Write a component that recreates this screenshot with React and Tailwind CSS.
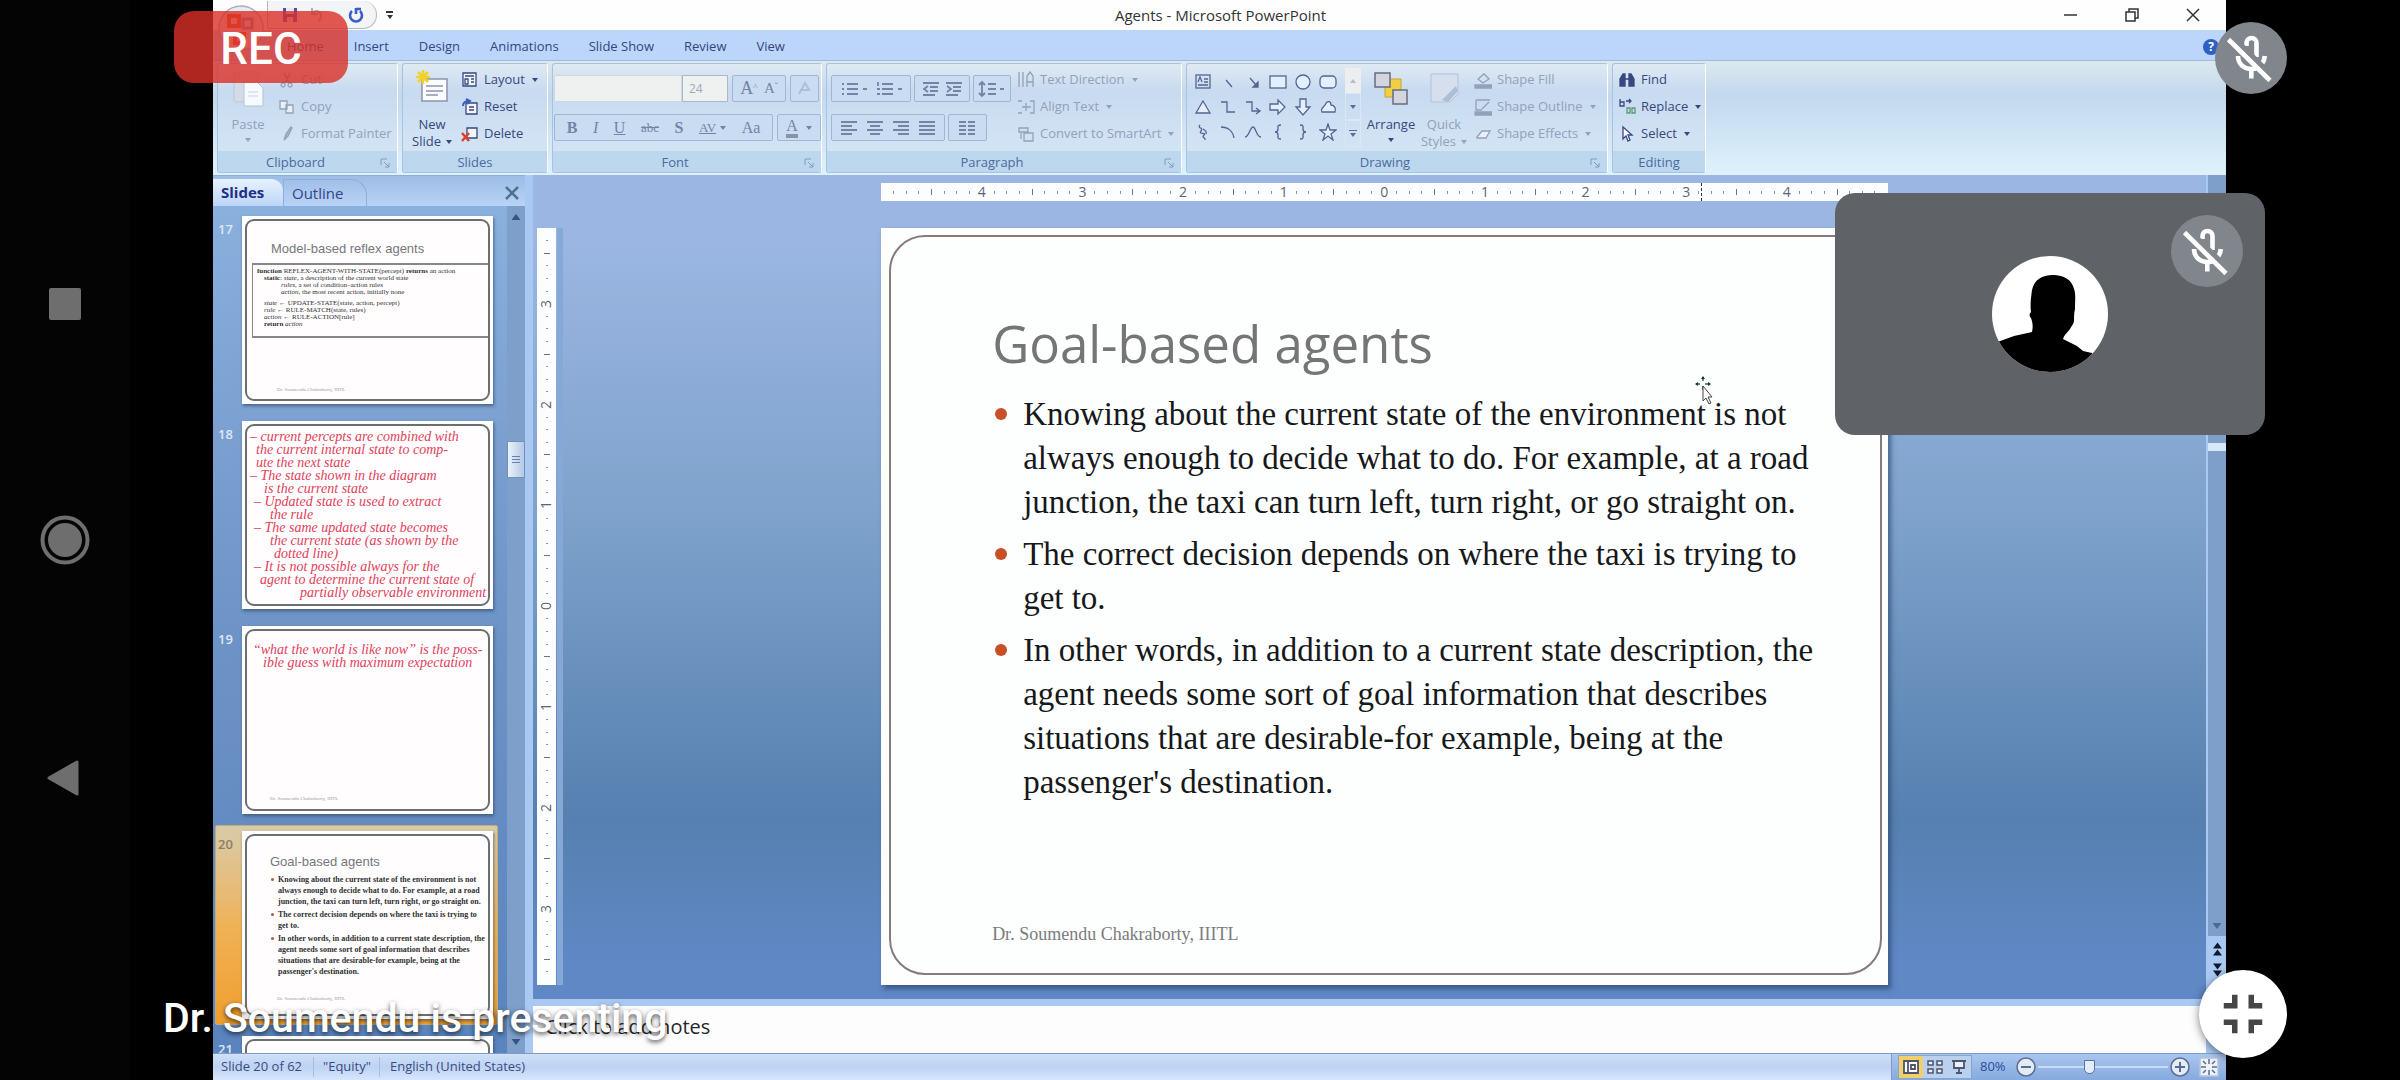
import React from "react";
import { MdFullscreenExit } from "react-icons/md";

const UI = "font-['Open_Sans',sans-serif]";
const SERIF = "font-['Liberation_Serif',serif]";

const bullets = [
  [
    "Knowing about the current state of the environment is not",
    "always enough to decide what to do. For example, at a road",
    "junction, the taxi can turn left, turn right, or go straight on.",
  ],
  ["The correct decision depends on where the taxi is trying to", "get to."],
  [
    "In other words, in addition to a current state description, the",
    "agent needs some sort of goal information that describes",
    "situations that are desirable-for example, being at the",
    "passenger's destination.",
  ],
];

function MicOff({ className }) {
  return (
    <button
      aria-label="Microphone off"
      className={"size-[72px] overflow-hidden rounded-full bg-[#80868b] " + className}
    >
      <svg viewBox="0 0 72 72" className="size-full" fill="none" stroke="#fff" strokeWidth="4.6">
        <path d="M31.500 24v-3a5 5 0 0 1 10 0v14" />
        <path d="M32 29v6a4.500 4.500 0 0 0 6 4z" fill="#fff" stroke="none" />
        <path d="M23 34c0 8 6 13 13.500 13 3 0 5.500-.8 8-2.500" />
        <path d="M36.300 46v10.500M49.800 34c-.2 2.800-1 5-2.500 7.200" />
        <path d="M13.500 17.500L55 58.500" stroke="#80868b" strokeWidth="9" transform="translate(2 -2)" />
        <path d="M13.500 17.500L55 58.500" />
      </svg>
    </button>
  );
}

function Arrow({ className = "" }) {
  return (
    <svg viewBox="0 0 6 4" className={"h-[4px] w-[6px] shrink-0 " + className} fill="currentColor">
      <path d="M0 0h6L3 4z" />
    </svg>
  );
}

function Small({ icon, label, arrow, off }) {
  return (
    <button
      className={
        "flex h-[27px] items-center gap-[5px] whitespace-nowrap text-[13px] " +
        (off ? "text-[#93a1b9]" : "text-[#37477f]")
      }
    >
      <svg viewBox="0 0 18 18" className="size-[18px] shrink-0" fill="none" stroke="currentColor" strokeWidth="1.300">
        {icon}
      </svg>
      {label}
      {arrow && <Arrow className="ml-[2px]" />}
    </button>
  );
}

function Group({ title, launcher, className, children }) {
  return (
    <section
      className={
        "flex shrink-0 flex-col overflow-hidden rounded-[3px] border border-[#a9c3de] border-r-white bg-linear-to-b from-[#dfeaf3] via-[#c8daf0] via-25% to-[#d6e8f5] " +
        className
      }
    >
      <div className="flex min-h-0 flex-1 items-start pt-[2px]">{children}</div>
      <div
        className={
          "relative flex h-[21px] items-center justify-center bg-[#bcd7ee] pt-[2px] text-[13px] text-[#4c6a9f] " +
          (launcher ? "pr-[24px]" : "")
        }
      >
        {title}
        {launcher && (
          <svg viewBox="0 0 10 10" className="absolute right-[7px] size-[10px]" fill="none" stroke="#7f9cc0">
            <path d="M1 7V1h6M4 4l5 5M9 5v4H5" />
          </svg>
        )}
      </div>
    </section>
  );
}

function Box({ className, children }) {
  return (
    <div
      className={
        "flex h-[27px] items-center justify-around rounded-[2px] border border-[#9fb6d5] bg-[#c9dcf2] px-[4px] text-[#7384a5] " +
        className
      }
    >
      {children}
    </div>
  );
}

function Glyph({ label, children, wide }) {
  return (
    <button aria-label={label} className={wide ? "h-[18px] w-[28px]" : "size-[18px]"}>
      <svg viewBox={wide ? "0 0 28 18" : "0 0 18 18"} className="size-full" fill="none" stroke="currentColor" strokeWidth="1.800">
        {children}
      </svg>
    </button>
  );
}

const shapes = [
  <><rect x="2" y="2" width="14" height="13" /><path d="M4 9l2-5 2 5M10 6h4M10 9h4M4 12h10" /></>,
  <path d="M7 7l6 7" />,
  <><path d="M6 5l6 7" /><path d="M14 9v5H9z" fill="currentColor" /></>,
  <rect x="1" y="3" width="16" height="12" fill="#e3efff" />,
  <circle cx="9" cy="9" r="7" fill="#e3efff" />,
  <rect x="1" y="3" width="16" height="12" rx="4" fill="#e3efff" />,
  <path d="M9 3l7 12H2z" fill="#e3efff" />,
  <path d="M2 4h6v10h8" />,
  <path d="M2 4h6v9h7M12 10l4 3-4 3" />,
  <path d="M1 6h8V2l7 7-7 7v-4H1z" fill="#e3efff" />,
  <path d="M6 1h6v8h4l-7 8-7-8h4z" fill="#e3efff" />,
  <path d="M3 14c-2-4 2-5 3-7 2-5 6-4 6 0 4 0 5 4 4 7z" fill="#e3efff" />,
  <path d="M6 2c-3 4 4 2 1 6s6 1 3 4 2 2 1 5M9 6c2 1 4 2 3 5" />,
  <path d="M2 4c7 0 12 4 13 11" />,
  <path d="M1 14C5 14 6 4 9 4s3 10 8 10" />,
  <path d="M12 2c-4 0-3 2-3 4s-1 3-3 3c2 0 3 1 3 3s-1 4 3 4" />,
  <path d="M6 2c4 0 3 2 3 4s1 3 3 3c-2 0-3 1-3 3s1 4-3 4" />,
  <path d="M9 1l2 6h6l-5 4 2 6-5-4-5 4 2-6-5-4h6z" fill="#e3efff" />,
];

function Ribbon() {
  return (
    <div className="flex h-[115px] gap-[4px] border-t border-[#a0bad9] bg-linear-to-b from-[#dce8ee] via-[#c3d8ee] via-30% to-[#def2fd] px-[4px] pt-[2px] pb-[2px]">
      <Group title="Clipboard" launcher className="w-[181px]">
        <button className="flex w-[60px] flex-col items-center text-[13px] leading-[17px] text-[#93a1b9]">
          <svg viewBox="0 0 36 44" className="mb-[6px] h-[44px] w-[36px]">
            <rect x="4" y="6" width="24" height="30" rx="2" fill="#d5dbe6" stroke="#bcc6d6" />
            <path d="M14 16h13l6 6v18H14z" fill="#f7fafd" stroke="#b4c3d8" />
            <path d="M18 26h10M18 30h10" stroke="#c3d2e6" />
          </svg>
          Paste
          <Arrow className="mt-[5px]" />
        </button>
        <div className="flex flex-col">
          <Small off label="Cut" icon={<path d="M6 2l5 10M12 2L7 12M5 12a2 2 0 1 0 .1 0M12 12a2 2 0 1 0 .1 0" />} />
          <Small off label="Copy" icon={<path d="M2 3h7v8H2zM8 7h7v8H8z" fill="#e8eff8" />} />
          <Small off label="Format Painter" icon={<path d="M13 2L8 9l-2 6 4-4 4-8z" fill="#a9b5c9" />} />
        </div>
      </Group>

      <Group title="Slides" className="w-[146px]">
        <button className="flex w-[58px] flex-col items-center text-[13px] leading-[17px] text-[#37477f]">
          <svg viewBox="0 0 36 44" className="mb-[6px] h-[44px] w-[36px]">
            <rect x="8" y="13" width="25" height="22" fill="#fbfcff" stroke="#8b94ab" strokeWidth="1.500" />
            <path d="M12 20h17M12 25h17M12 29h12" stroke="#a8afc0" strokeWidth="2" />
            <path d="M9 4v14M2 11h14M4 6l10 10M14 6L4 16" stroke="#f2d12c" strokeWidth="2.500" />
          </svg>
          New
          <span className="flex items-center gap-[5px]">
            Slide <Arrow />
          </span>
        </button>
        <div className="flex flex-col">
          <Small arrow label="Layout" icon={<><path d="M2 2h13v13H2z" fill="#f2f6fb" /><path d="M4 5h9M4 8h3v5H4zM10 8h3M10 11h3" /></>} />
          <Small label="Reset" icon={<><path d="M5 5h11v11H5z" fill="#f2f6fb" /><path d="M8 9h5M8 12h5" /><path d="M2 8c0-4 3-5 6-5M5 1l4 2-3 3" stroke="#3a5fc0" strokeWidth="2" /></>} />
          <Small label="Delete" icon={<><path d="M6 3h10v10H6z" fill="#f2f6fb" /><path d="M1 8l7 8M8 8l-7 8" stroke="#d8432e" strokeWidth="2.500" /></>} />
        </div>
      </Group>

      <Group title="Font" launcher className="w-[270px]">
        <div className="flex w-full flex-col gap-[12px] pt-[9px] pl-px">
          <div className="flex gap-[4px]">
            <div className="flex h-[27px] text-[12px] text-[#a0a9b8]">
              <select aria-label="Font" className="w-[128px] appearance-none border border-[#cdd8e4] bg-[#eff1f0] px-[4px]">
                <option></option>
              </select>
              <select aria-label="Font size" className="w-[46px] appearance-none border border-[#a9b9cc] bg-[#eff1f0] px-[6px]">
                <option>24</option>
              </select>
            </div>
            <Box className={"w-[54px] text-[18px] " + SERIF}>
              <button>A<sup className="text-[9px]">^</sup></button>
              <button className="text-[15px]">A<sup className="text-[9px]">ˇ</sup></button>
            </Box>
            <Box className="w-[29px]">
              <Glyph label="Clear formatting"><path d="M3 14L9 3l5 8M4 10h8" opacity=".35" /></Glyph>
            </Box>
          </div>
          <div className={"flex gap-[4px] text-[16px] " + SERIF}>
            <Box className="w-[220px]">
              <button className="font-bold">B</button>
              <button className="italic">I</button>
              <button className="underline">U</button>
              <button className="text-[13px] line-through">abc</button>
              <button className="font-bold">S</button>
              <button className="flex items-center gap-[4px] text-[13px] underline">AV <Arrow /></button>
              <button>Aa</button>
            </Box>
            <Box className="w-[44px]">
              <button className="border-b-4 border-[#8793a8] leading-[16px]">A</button>
              <Arrow />
            </Box>
          </div>
        </div>
      </Group>

      <Group title="Paragraph" launcher className="w-[356px]">
        <div className="flex w-[186px] flex-col gap-[12px] pt-[9px] pl-[4px]">
          <div className="flex gap-[3px]">
            <Box className="w-[80px]">
              <Glyph wide label="Bullets"><path d="M2 4h2M2 9h2M2 14h2M7 4h11M7 9h11M7 14h11M23 9h4" /></Glyph>
              <Glyph wide label="Numbering"><path d="M3 2v4M2 9h3M2 14h3M7 4h11M7 9h11M7 14h11M23 9h4" /></Glyph>
            </Box>
            <Box className="w-[56px]">
              <Glyph label="Decrease indent"><path d="M1 3h16M8 7h8M8 11h8M1 15h12M6 6L2 9l4 3" /></Glyph>
              <Glyph label="Increase indent"><path d="M1 3h16M8 7h8M8 11h8M1 15h12M2 6l4 3-4 3" /></Glyph>
            </Box>
            <Box className="w-[38px]">
              <Glyph wide label="Line spacing"><path d="M4 2v14M1 5l3-3 3 3M1 13l3 3 3-3M10 4h8M10 9h8M10 14h8M22 9h4" /></Glyph>
            </Box>
          </div>
          <div className="flex gap-[3px]">
            <Box className="w-[114px]">
              <Glyph label="Align left"><path d="M1 3h16M1 7h11M1 11h16M1 15h11" /></Glyph>
              <Glyph label="Center"><path d="M1 3h16M4 7h10M1 11h16M4 15h10" /></Glyph>
              <Glyph label="Align right"><path d="M1 3h16M6 7h11M1 11h16M6 15h11" /></Glyph>
              <Glyph label="Justify"><path d="M1 3h16M1 7h16M1 11h16M1 15h16" /></Glyph>
            </Box>
            <Box className="w-[39px]">
              <Glyph wide label="Columns"><path d="M5 3h7M5 7h7M5 11h7M5 15h7M14 3h7M14 7h7M14 11h7M14 15h7" /></Glyph>
            </Box>
          </div>
        </div>
        <div className="flex flex-col pl-[4px]">
          <Small off arrow label="Text Direction" icon={<path d="M2 1v15M6 1v15M10 16V5l3-4 3 4v11M10 11h6" />} />
          <Small off arrow label="Align Text" icon={<path d="M1 3h4M1 15h4M13 3h4v12h-4M5 9h9M9 5v8" />} />
          <Small off arrow label="Convert to SmartArt" icon={<path d="M2 3h9v4H2zM7 8h9v8H7zM4 8v6" />} />
        </div>
      </Group>

      <Group title="Drawing" launcher className="w-[422px]">
        <div className="grid grid-cols-6 gap-x-[7px] gap-y-[7px] pt-[7px] pl-[7px] text-[#536590]">
          {shapes.map((s, i) => (
            <button key={i} aria-label={"Shape " + (i + 1)} className="size-[18px]">
              <svg viewBox="0 0 18 18" className="size-full" fill="none" stroke="currentColor" strokeWidth="1.300">
                {s}
              </svg>
            </button>
          ))}
        </div>
        <div className="mt-[2px] ml-[8px] flex h-[79px] w-[16px] flex-col text-[#5b6d96]">
          <button aria-label="Scroll up" className="flex flex-1 items-center justify-center bg-[#eceef0] text-[#b5bcc8]"><Arrow className="rotate-180" /></button>
          <button aria-label="Scroll down" className="flex flex-1 items-center justify-center border border-[#dbe7f7]"><Arrow /></button>
          <button aria-label="More shapes" className="flex flex-1 flex-col items-center justify-center gap-[2px] border border-[#dbe7f7]"><span className="h-px w-[8px] bg-[#5b6d96]" /><Arrow /></button>
        </div>
        <button className="ml-[2px] flex w-[56px] flex-col items-center text-[13px] leading-[17px] text-[#37477f]">
          <svg viewBox="0 0 36 44" className="mb-[6px] h-[44px] w-[36px]">
            <path d="M12 13h16v18H12z" fill="#f1cf45" stroke="#c9a437" />
            <path d="M2 7h15v14H2zM20 24h14v14H20z" fill="#d3d6df" stroke="#656c80" strokeWidth="1.500" />
          </svg>
          Arrange
          <Arrow className="mt-[5px]" />
        </button>
        <button className="flex w-[50px] flex-col items-center text-[13px] leading-[17px] text-[#93a1b9]">
          <svg viewBox="0 0 36 44" className="mb-[6px] h-[44px] w-[36px]">
            <path d="M5 8h27v20l-8 8H5z" fill="#d5dfee" stroke="#b3c1d8" />
            <path d="M30 20L16 34l6 2 10-11z" fill="#aebdd6" />
          </svg>
          Quick
          <span className="flex items-center gap-[5px]">
            Styles <Arrow />
          </span>
        </button>
        <div className="flex flex-col pl-[5px]">
          <Small off label="Shape Fill" icon={<><path d="M4 8l6-5 5 5-6 4z" /><path d="M1 14h17v3H1z" fill="currentColor" /></>} />
          <Small off arrow label="Shape Outline" icon={<><path d="M2 2h14M2 2v10h6M15 4l-7 7" /><path d="M1 14h17v3H1z" fill="currentColor" /></>} />
          <Small off arrow label="Shape Effects" icon={<path d="M3 12l5-6h8l-4 7H3z" fill="#e8eff8" />} />
        </div>
      </Group>

      <Group title="Editing" className="w-[94px]">
        <div className="flex flex-col pl-[5px]">
          <Small label="Find" icon={<path d="M2 15V8l3-5h2v12zM16 15V8l-3-5h-2v12zM7 8h4" fill="currentColor" />} />
          <Small arrow label="Replace" icon={<><path d="M2 1v7h4V4H2M8 3h4M11 1l2 2-2 2" /><path d="M9 10h3v5H9zM14 10h3v5h-3z" stroke="#5b9a76" /></>} />
          <Small arrow label="Select" icon={<path d="M5 2v12l3-3 2 5 2-1-2-5h4z" fill="#fff" />} />
        </div>
      </Group>
    </div>
  );
}

function Ruler({ count, vertical }) {
  const mid = count / 2;
  return (
    <div
      className={
        "flex items-center justify-between bg-[#fcfdff] text-[14px] leading-none text-[#5c6470] " +
        (vertical ? "h-full w-[19px] flex-col" : "h-[18px] w-full")
      }
    >
      {Array.from({ length: count + 1 }, (_, i) => {
        const d = Math.abs(i - mid);
        const edge = i === 0 || i === count;
        return (
          <span
            key={i}
            className={"flex items-center justify-center " + (vertical ? "h-0 w-[18px]" : "h-[18px] w-0")}
          >
            {edge ? null : d % 8 === 0 ? (
              <span className={vertical ? "-rotate-90" : ""}>{d / 8}</span>
            ) : d % 4 === 0 ? (
              <span className={"shrink-0 bg-[#6b7482] " + (vertical ? "h-px w-[6px]" : "h-[6px] w-px")} />
            ) : (
              <span className={"shrink-0 bg-[#8a929f] " + (vertical ? "h-px w-[2px]" : "h-[3px] w-px")} />
            )}
          </span>
        );
      })}
    </div>
  );
}

function Thumb({ n, selected, children }) {
  return (
    <li className="relative flex h-[188px] shrink-0">
      {selected && (
        <div className="absolute -top-[6px] -bottom-[6px] left-[2px] w-[283px] rounded-[2px] border border-[#c8ad72] bg-linear-to-b from-[#d8cba8] via-[#efb257] via-50% to-[#f09e2a]" />
      )}
      <span
        className={
          "relative w-[29px] pt-[4px] pl-[5px] text-[13px] font-semibold " +
          (selected ? "text-[#8b7d68]" : "text-[#dfe8f5]")
        }
      >
        {n}
      </span>
      <button
        aria-label={"Slide " + n}
        className="relative flex w-[251px] bg-white p-[3px] text-left shadow-[1px_2px_3px_rgba(40,60,90,0.6)]"
      >
        <div className="relative h-full w-full overflow-hidden rounded-[9px] border-2 border-[#6a7072] bg-[#fffdfe]">{children}</div>
      </button>
    </li>
  );
}

const notes18 = [
  ["– current percepts are combined with", "pl-0"],
  ["the current internal state to comp-", "pl-[6px]"],
  ["ute the next state", "pl-[6px]"],
  ["– The state shown in the diagram", "pl-0"],
  ["is the current state", "pl-[14px]"],
  ["– Updated state is used to extract", "pl-[4px]"],
  ["the rule", "pl-[20px]"],
  ["– The same updated state becomes", "pl-[4px]"],
  ["the current state (as shown by the", "pl-[20px]"],
  ["dotted line)", "pl-[24px]"],
  ["– It is not possible always for the", "pl-[4px]"],
  ["agent to determine the current state of", "pl-[10px]"],
  ["partially observable environment", "pl-[50px]"],
];

function SlidesPanel() {
  return (
    <aside className="flex w-[312px] shrink-0 flex-col">
      <div className="flex h-[31px] items-end border-t border-[#8caed9] bg-linear-to-b from-[#9dbde6] to-[#b8d3f5]">
        <button className="h-[27px] w-[70px] rounded-tr-[12px] bg-linear-to-b from-[#e8f2ff] to-[#bcd5f6] pl-[8px] text-left text-[15px] font-bold text-[#1f2f86]">Slides</button>
        <button className="h-[27px] w-[84px] rounded-tr-[16px] border-x border-t border-[#8fadd8] pl-[8px] text-left text-[15px] text-[#33448c]">Outline</button>
        <button aria-label="Close panel" className="mr-[6px] mb-[6px] ml-auto">
          <svg viewBox="0 0 14 14" className="size-[14px]" stroke="#4d7393" strokeWidth="2.500"><path d="M1 1l12 12M13 1L1 13" /></svg>
        </button>
      </div>
      <div className="flex min-h-0 flex-1">
        <ol className="flex min-h-0 min-w-0 flex-1 flex-col gap-[17px] overflow-hidden bg-linear-to-b from-[#8ab0de] via-[#6e93c6] via-50% to-[#5a84bd] pt-[10px]">
          <Thumb n={17}>
            <div className="pt-[19px] pl-[24px] font-['Liberation_Sans',sans-serif] text-[13px] leading-[18px] text-[#75777b]">Model-based reflex agents</div>
            <div className={"mt-[5px] ml-[5px] h-[75px] border-y-2 border-l border-[#85878a] pt-[3px] pl-[4px] text-[7px] leading-[7px] text-[#2f3033] " + SERIF}>
              <p><b>function</b> REFLEX-AGENT-WITH-STATE(percept) <b>returns</b> an action</p>
              <p className="pl-[7px]"><b>static</b>: <i>state</i>, a description of the current world state</p>
              <p className="pl-[24px]"><i>rules</i>, a set of condition–action rules</p>
              <p className="pl-[24px]"><i>action</i>, the most recent action, initially none</p>
              <p className="pt-[4px] pl-[7px]"><i>state</i> ← UPDATE-STATE(state, action, percept)</p>
              <p className="pl-[7px]"><i>rule</i> ← RULE-MATCH(state, rules)</p>
              <p className="pl-[7px]"><i>action</i> ← RULE-ACTION[rule]</p>
              <p className="pl-[7px]"><b>return</b> <i>action</i></p>
            </div>
            <div className={"pt-[48px] pl-[30px] text-[5px] text-[#9b9b9b] " + SERIF}>Dr. Soumendu Chakraborty, IIITL</div>
          </Thumb>
          <Thumb n={18}>
            <div className={"pt-[4px] pl-[3px] text-[14px] leading-[13px] whitespace-nowrap text-[#e0415a] italic " + SERIF}>
              {notes18.map(([t, pad]) => (
                <p key={t} className={pad}>{t}</p>
              ))}
            </div>
          </Thumb>
          <Thumb n={19}>
            <div className={"pt-[12px] pl-[6px] text-[14px] leading-[13px] whitespace-nowrap text-[#e0415a] italic " + SERIF}>
              <p>“what the world is like now” is the poss-</p>
              <p className="pl-[10px]">ible guess with maximum expectation</p>
            </div>
            <div className={"pt-[126px] pl-[23px] text-[5px] text-[#9b9b9b] " + SERIF}>Dr. Soumendu Chakraborty, IIITL</div>
          </Thumb>
          <Thumb n={20} selected>
            <div className="pt-[17px] pl-[23px] font-['Liberation_Sans',sans-serif] text-[13px] leading-[18px] text-[#75777b]">Goal-based agents</div>
            <ul className={"pt-[3px] text-[8px] leading-[11px] font-bold whitespace-nowrap text-[#2f3033] " + SERIF}>
              {bullets.map((b) => (
                <li key={b[0]} className="flex gap-[4px] pb-[2px] pl-[24px]">
                  <span className="mt-[4px] size-[3px] shrink-0 rounded-full bg-[#a8643f]" />
                  <div>
                    {b.map((l) => (
                      <p key={l}>{l}</p>
                    ))}
                  </div>
                </li>
              ))}
            </ul>
            <div className={"pt-[16px] pl-[30px] text-[5px] text-[#9b9b9b] " + SERIF}>Dr. Soumendu Chakraborty, IIITL</div>
          </Thumb>
          <Thumb n={21} />
        </ol>
        <div className="flex w-[18px] shrink-0 flex-col items-center bg-[#7d9fca] text-[#35557f]">
          <button aria-label="Scroll up" className="flex h-[22px] w-full items-center justify-center"><Arrow className="rotate-180 scale-150" /></button>
          <div className="flex w-full flex-1 flex-col pt-[213px]">
            <div className="flex h-[37px] w-full flex-col items-center justify-center gap-[2px] border border-[#7590b5] bg-linear-to-r from-[#eaf2fc] to-[#b3c9e6]">
              <span className="h-px w-[8px] bg-[#6481a9]" />
              <span className="h-px w-[8px] bg-[#6481a9]" />
              <span className="h-px w-[8px] bg-[#6481a9]" />
            </div>
          </div>
          <button aria-label="Scroll down" className="flex h-[22px] w-full items-center justify-center"><Arrow className="scale-150" /></button>
        </div>
      </div>
    </aside>
  );
}

function Slide() {
  return (
    <article className="h-full bg-[#fdfefe] pt-[7px] pr-[6px] pb-[10px] pl-[8px] shadow-[3px_4px_5px_rgba(30,60,100,0.6)]">
      <div className="flex h-full flex-col rounded-[36px] border-2 border-[#857b7b] pl-[101px]">
        <h1 className="mt-[70px] font-['Open_Sans',sans-serif] text-[51px] leading-[72px] whitespace-nowrap text-[#757577]">Goal-based agents</h1>
        <ul className={"mt-[13px] flex flex-col gap-[8px] text-[33px] leading-[44px] whitespace-nowrap text-[#17181a] " + SERIF}>
          {bullets.map((b) => (
            <li key={b[0]} className="flex gap-[16px]">
              <span className="mt-[16px] ml-[3px] size-[12px] shrink-0 rounded-full bg-[#c84f26]" />
              <div>
                {b.map((l) => (
                  <p key={l}>{l}</p>
                ))}
              </div>
            </li>
          ))}
        </ul>
        <footer className={"mt-auto mb-[27px] text-[18px] leading-[24px] text-[#7b7b7d] " + SERIF}>Dr. Soumendu Chakraborty, IIITL</footer>
      </div>
    </article>
  );
}

function Editor() {
  return (
    <main className="flex min-w-0 flex-1 flex-col border-l-8 border-[#a9c9f3]">
      <div className="flex min-h-0 flex-1">
        <div className="relative grid min-w-0 flex-1 grid-cols-[30px_79fr_250fr_79fr] grid-rows-[53px_minmax(0,1fr)_14px] bg-[linear-gradient(to_bottom,#9bb6e2_0%,#9bb6e2_8%,#7fa3cc_40%,#5680b0_78%,#6088c5_96%)]">
          <div className="col-start-3 pt-[8px]"><Ruler count={80} /></div>
          <div className="col-start-1 row-start-2 border-r-[6px] border-[#86a8d6] pl-[4px]"><Ruler count={60} vertical /></div>
          <div className="col-start-3 row-start-2"><Slide /></div>
          <div className="absolute top-[8px] left-[1168px] h-[18px] border-l border-dashed border-[#333]" />
          <svg viewBox="0 0 20 30" className="absolute top-[201px] left-[1161px] h-[30px] w-[20px]">
            <path d="M9 1v14M2 8h14" stroke="#2e6b4c" strokeWidth="1.500" strokeDasharray="4 5 4" />
            <path d="M9 0l2 3H7zM1 8l3-2v4zM17 8l-3-2v4z" fill="#1f2d3a" />
            <path d="M9 10v15l3-3 3 6 2-1-3-6h4z" fill="#fff" stroke="#444" />
          </svg>
        </div>
        <div className="flex w-[20px] shrink-0 flex-col items-center border-l-2 border-[#a9c9f3] bg-[#7d9fca] text-[#456b98]">
          <div className="flex w-full flex-1 flex-col pt-[268px]">
            <div className="h-[8px] w-full bg-[#d8e8f6]" />
          </div>
          <button aria-label="Scroll down" className="flex h-[20px] items-center"><Arrow className="scale-150" /></button>
          <div className="flex h-[63px] w-full flex-col items-center gap-[7px] bg-[#a9c9f3] pt-[6px] text-[#10182c]">
            <button aria-label="Previous slide"><Arrow className="h-[7px] w-[9px] rotate-180" /><Arrow className="h-[7px] w-[9px] rotate-180" /></button>
            <button aria-label="Next slide"><Arrow className="h-[7px] w-[9px]" /><Arrow className="h-[7px] w-[9px]" /></button>
          </div>
        </div>
      </div>
      <div className="h-[54px] border-t-[7px] border-[#a9c9f3] bg-[#a9c9f3] pr-[20px]">
        <textarea
          aria-label="Notes"
          defaultValue="Click to add notes"
          className="block h-full w-full resize-none bg-[#fefdfe] px-[12px] py-[8px] text-[20px] leading-[26px] text-[#26262a]"
        />
      </div>
    </main>
  );
}

function StatusBar() {
  return (
    <footer className="flex h-[27px] shrink-0 items-center border-t border-[#7d9dc8] bg-linear-to-b from-[#cfe0f8] via-[#bdd3f3] to-[#d6e6fc] text-[13px] text-[#3a4a80]">
      <span className="w-[101px] border-r border-[#a5bfe2] pl-[8px]">Slide 20 of 62</span>
      <span className="w-[66px] border-r border-[#a5bfe2] pl-[9px]">"Equity"</span>
      <span className="pl-[10px]">English (United States)</span>
      <div className="ml-auto flex h-full w-[335px] items-center border-l border-[#7d9dc8] bg-linear-to-b from-[#a9c6ee] to-[#86aade] pl-[6px]">
        <div className="flex h-[24px] w-[74px] items-center border border-[#8aa5cc] bg-[#b9d0ee] text-[#4c566b]">
          <button aria-label="Normal view" className="flex h-full w-[24px] items-center justify-center bg-[#f2cf6b]">
            <svg viewBox="0 0 16 16" className="size-[16px]" fill="#fff" stroke="currentColor" strokeWidth="1.800"><path d="M1 2h14v12H1zM5 2v12M8 6h4v4H8z" /></svg>
          </button>
          <button aria-label="Slide sorter" className="flex h-full w-[24px] items-center justify-center">
            <svg viewBox="0 0 16 16" className="size-[16px]" fill="#eef" stroke="currentColor" strokeWidth="1.500"><path d="M1 2h5v4H1zM10 2h5v4h-5zM1 10h5v4H1zM10 10h5v4h-5z" /></svg>
          </button>
          <button aria-label="Slide show" className="flex h-full w-[24px] items-center justify-center">
            <svg viewBox="0 0 16 16" className="size-[16px]" fill="#eef" stroke="currentColor" strokeWidth="1.800"><path d="M1 2h14M3 3v6h10V3M8 9v4M5 14h6" /></svg>
          </button>
        </div>
        <button className="ml-[8px] w-[36px] text-left text-[#2d4c9a]">80%</button>
        <button aria-label="Zoom out" className="size-[20px] shrink-0">
          <svg viewBox="0 0 20 20" fill="#e3ebf7" stroke="#5a6d90" strokeWidth="1.500"><circle cx="10" cy="10" r="9" /><path d="M5 10h10" strokeWidth="2" /></svg>
        </button>
        <input
          type="range"
          aria-label="Zoom"
          defaultValue="39"
          className="mx-[2px] h-[2px] w-[130px] appearance-none bg-[#c9dcf6] [&::-webkit-slider-thumb]:h-[14px] [&::-webkit-slider-thumb]:w-[11px] [&::-webkit-slider-thumb]:appearance-none [&::-webkit-slider-thumb]:rounded-b-[5px] [&::-webkit-slider-thumb]:border [&::-webkit-slider-thumb]:border-[#56749f] [&::-webkit-slider-thumb]:bg-[#e3edf9]"
        />
        <button aria-label="Zoom in" className="size-[20px] shrink-0">
          <svg viewBox="0 0 20 20" fill="#e3ebf7" stroke="#5a6d90" strokeWidth="1.500"><circle cx="10" cy="10" r="9" /><path d="M5 10h10M10 5v10" strokeWidth="2" /></svg>
        </button>
        <button aria-label="Fit slide" className="ml-[9px] size-[20px] shrink-0">
          <svg viewBox="0 0 20 20" fill="#eef3fa" stroke="#5a6d90" strokeWidth="1.500"><path d="M1 1h18v18H1z" stroke="#b5c3d8" /><path d="M10 2v5M10 13v5M2 10h5M13 10h5M4 4l3 3M16 4l-3 3M4 16l3-3M16 16l-3-3" /></svg>
        </button>
      </div>
    </footer>
  );
}

function PowerPoint() {
  return (
    <div className={"relative flex h-full min-w-0 flex-1 flex-col overflow-hidden bg-[#9bb6e2] " + UI}>
      <header className="flex h-[30px] shrink-0 items-center bg-[#fefefe]">
        <div className="flex h-full flex-1 items-center">
          <div className="ml-[54px] flex h-[28px] w-[110px] items-center gap-[11px] rounded-r-[14px] border border-t-0 border-[#b3b5bb] bg-[#f3f4f6] pl-[14px]">
            <button aria-label="Save"><svg viewBox="0 0 16 16" className="size-[16px]" fill="#4a4fb0"><path d="M1 1h14v14H1z" /><path d="M4 1h8v6H4zM5 10h6v5H5z" fill="#e8e9f5" /></svg></button>
            <button aria-label="Undo"><svg viewBox="0 0 16 16" className="size-[16px]" fill="none" stroke="#aab0be" strokeWidth="2"><path d="M3 6c6-5 12 0 7 8M3 1v6h6" /></svg></button>
            <button aria-label="Redo" className="ml-[12px]"><svg viewBox="0 0 16 16" className="size-[16px]" fill="none" stroke="#3a5cc4" strokeWidth="2.600"><path d="M4 4a6 6 0 1 0 8 0M8 1v6M8 2h5" /></svg></button>
          </div>
          <button aria-label="Customize toolbar" className="ml-[9px] flex flex-col items-center gap-[2px] text-[#333]"><span className="h-[2px] w-[7px] bg-[#333]" /><Arrow /></button>
        </div>
        <h2 className="pl-[28px] text-[15px] text-[#333]">Agents - Microsoft PowerPoint</h2>
        <div className="flex flex-1 items-center justify-end gap-[47px] pr-[26px] text-[#333]">
          <button aria-label="Minimize"><svg viewBox="0 0 14 14" className="size-[14px]" stroke="currentColor" strokeWidth="1.500"><path d="M0 7h13" /></svg></button>
          <button aria-label="Restore"><svg viewBox="0 0 14 14" className="size-[14px]" fill="none" stroke="currentColor" strokeWidth="1.500"><path d="M1 4h9v9H1zM4 4V1h9v9h-3" /></svg></button>
          <button aria-label="Close"><svg viewBox="0 0 14 14" className="size-[14px]" stroke="currentColor" strokeWidth="1.500"><path d="M1 1l12 12M13 1L1 13" /></svg></button>
        </div>
      </header>
      <nav className="flex h-[30px] shrink-0 items-center gap-[30px] bg-[#bcd6fb] pt-[3px] pr-[7px] pl-[74px] text-[13px] text-[#34457f]">
        <button>Home</button>
        <button>Insert</button>
        <button>Design</button>
        <button>Animations</button>
        <button>Slide Show</button>
        <button>Review</button>
        <button>View</button>
        <button aria-label="Help" className="ml-auto size-[16px] rounded-full bg-[#2d5fc4] text-[12px] leading-[16px] font-bold text-white">?</button>
      </nav>
      <Ribbon />
      <div className="flex min-h-0 flex-1">
        <SlidesPanel />
        <Editor />
      </div>
      <StatusBar />
      <svg viewBox="0 0 48 48" className="absolute top-[4px] left-[4px] size-[48px]">
        <circle cx="24" cy="24" r="22" fill="#e8ebf1" stroke="#a9b1bf" strokeWidth="1.500" />
        <path d="M12 12h10v10H12zM18 30h9v9h-9z" fill="none" stroke="#f0571f" strokeWidth="4" />
        <path d="M26 15h9v9h-9z" fill="none" stroke="#8a93b5" strokeWidth="3" />
      </svg>
    </div>
  );
}

export default function App() {
  return (
    <div className="relative flex h-screen w-full overflow-hidden bg-black font-['Roboto',sans-serif]">
      <nav className="flex w-[130px] shrink-0 flex-col items-center justify-center gap-[195px] bg-[#040404] pt-[3px] text-[#6e6e6e]">
        <button aria-label="Recent apps" className="size-[32px] rounded-[2px] bg-[#6e6e6e]" />
        <button aria-label="Home" className="size-[50px]">
          <svg viewBox="0 0 50 50" fill="currentColor"><circle cx="25" cy="25" r="22.500" fill="none" stroke="currentColor" strokeWidth="4" /><circle cx="25" cy="25" r="17" /></svg>
        </button>
        <button aria-label="Back" className="size-[36px]">
          <svg viewBox="0 0 36 36" fill="currentColor" stroke="currentColor" strokeWidth="3" strokeLinejoin="round"><path d="M2 18L30 2v32z" /></svg>
        </button>
      </nav>
      <div className="w-[83px] shrink-0" />
      <PowerPoint />
      <div className="w-[174px] shrink-0" />

      <div className="absolute top-[11px] left-[174px] flex h-[72px] w-[174px] items-center justify-center rounded-[20px] bg-[#d92f27]/80 pt-[4px] text-[44px] font-medium text-white">REC</div>
      <MicOff className="absolute top-[22px] right-[113px]" />

      <section aria-label="Participant" className="absolute top-[193px] right-[135px] flex h-[242px] w-[430px] items-center justify-center rounded-[20px] bg-[#5f6368]">
        <svg viewBox="0 0 116 116" className="size-[116px]">
          <defs><clipPath id="avatar"><circle cx="58" cy="58" r="58" /></clipPath></defs>
          <g clipPath="url(#avatar)">
            <path d="M0 0h116v116H0z" fill="#fff" />
            <path d="M0 88L22 80l18-4c1-4 1-9-1-14-2-2-2-4 0-6-1-8 0-14 1-22 2-10 10-15 21-15s19 5 21 14c2 5 1 11 1 20-1 4-1 8-1 11 0 4-2 5-4 9-3 4-6 6-7 10l14 7 6 5 9 2v30H0z" />
          </g>
        </svg>
        <MicOff className="absolute top-[22px] right-[22px]" />
      </section>

      <div className="absolute bottom-[38px] left-[163px] text-[41px] leading-[48px] font-medium text-white [text-shadow:0_2px_5px_rgba(0,0,0,0.7)]">Dr. Soumendu is presenting</div>

      <button aria-label="Exit full screen" className="absolute right-[113px] bottom-[22px] flex size-[88px] items-center justify-center rounded-full bg-white text-[#444746] shadow-[0_2px_8px_rgba(0,0,0,0.5)]">
        <MdFullscreenExit className="size-[66px]" />
      </button>
    </div>
  );
}
